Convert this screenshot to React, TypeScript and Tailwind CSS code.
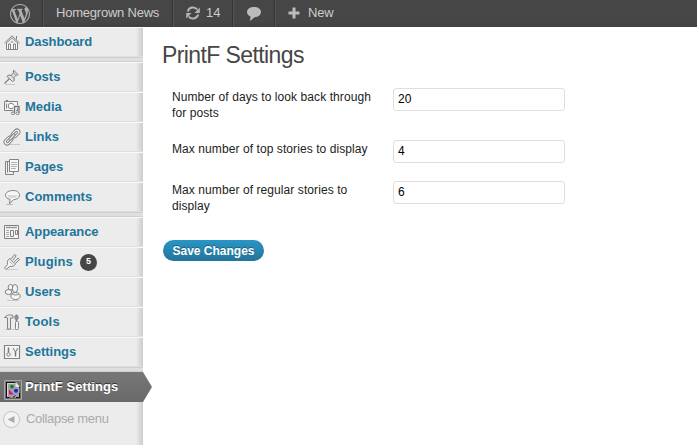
import React from "react";

type IconProps = { children: React.ReactNode; className?: string };

const Glyph = ({ children, className = "" }: IconProps) => (
  <svg
    width="18"
    height="18"
    viewBox="0 0 18 18"
    fill="none"
    stroke="#828282"
    strokeWidth="1"
    className={`ml-[3px] mr-1 shrink-0 ${className}`}
  >
    {children}
  </svg>
);

const HomeIcon = () => (
  <Glyph>
    <path d="M3.5 10v6.5h11V10" fill="#f8f8f8" />
    <path d="M1.5 10 9 2.8l7.5 7.2M3 10.5 9 4.8l6 5.7M13.5 3v3.5" />
    <path d="M5.5 16V11h2v5M10.5 16v-5h2v5M9 8v2" />
  </Glyph>
);
const PinIcon = () => (
  <Glyph>
    <path d="M2 16.5h10" stroke="#c8c8c8" />
    <path d="m1.5 15.5 5-5" strokeWidth="1.3" />
    <path d="m10.500 2 4.700 4.800-2 .4-2.200 2.300.2 3.200-1.500.8L4 8.500l1-1.300 3.200.2 2.200-2.500z" fill="#e4e4e4" />
    <path d="m7.800 7.200 3.500 3.400M10 4.500l3.300 3.200" />
  </Glyph>
);
const MediaIcon = () => (
  <Glyph>
    <path d="M1.5 3.500h13v9h-13zM3 3V2.500h2" fill="#f6f6f6" />
    <circle cx="8" cy="8" r="2.800" fill="#ffffff" />
    <path d="M3.500 5.500v5" />
    <path d="M11.500 15V8.500h5V15" stroke="#ececec" strokeWidth="3" />
    <path d="M11.500 15V8.500h4.500V15" stroke="#777" strokeWidth="1.300" />
    <ellipse cx="10" cy="15.300" rx="1.600" ry="1.300" fill="#eee" />
    <ellipse cx="14.500" cy="15.300" rx="1.600" ry="1.300" fill="#eee" />
  </Glyph>
);
const LinkIcon = () => (
  <Glyph>
    <path d="M6 16.500h11" stroke="#c8c8c8" />
    <g transform="rotate(-45 9 9)">
      <rect x="-1" y="6" width="10" height="6" rx="3" fill="#f8f8f8" />
      <rect x="1.500" y="8" width="5" height="2" rx="1" />
      <rect x="9" y="6" width="10" height="6" rx="3" fill="#f8f8f8" />
      <rect x="11.500" y="8" width="5" height="2" rx="1" />
      <rect x="5" y="7.800" width="8" height="2.400" rx="1.200" fill="#e4e4e4" />
    </g>
  </Glyph>
);
const PagesIcon = () => (
  <Glyph>
    <path d="M6 3.500H2.500v13h8V14" fill="#f0f0f0" />
    <path d="M4.500 4v10.500" />
    <path d="M6.500 1.500h9v12h-9z" fill="#f8f8f8" />
    <path d="M8 4.500h6M8 6.500h6M8 8.500h6M8 10.500h5" stroke="#b0b0b0" />
  </Glyph>
);
const CommentIcon = () => (
  <Glyph>
    <path d="M3 16.500h7" stroke="#bbb" />
    <path
      d="M10 2.500c4 0 6.500 1.900 6.500 4.600s-2.500 4.500-6 4.500L6.500 15.800l.5-4.500C4 10.700 2.500 9.200 2.500 7.100c0-2.700 3.500-4.600 7.500-4.600z"
      fill="#f6f6f6"
    />
    <path d="M5 7.500h9M5 8.500h9M6 9.500h7" stroke="#d8d8d8" />
  </Glyph>
);
const AppearanceIcon = () => (
  <Glyph>
    <path d="M1.500 2.500h14v13h-14z" fill="#f6f6f6" />
    <path d="M3 4.500h11" strokeWidth="1.500" stroke="#999" />
    <path d="M3 7.500h3M3 9.500h3M3 11.500h3M3 13.500h3" stroke="#aaa" />
    <path d="M7.500 7.500h3v6h-3zM12.500 7.500h2v4h-2z" />
  </Glyph>
);
const PluginIcon = () => (
  <Glyph>
    <path d="M4 16.500h11" stroke="#ccc" />
    <path
      d="M7 5.500c1.500 2.500 3 4 5.500 5-.5 2.500-3 3.500-5.500 2.800L3 16.500 1.500 15l3-3.500C3.800 9 4.800 6.500 7 5.500z"
      fill="#f5f5f5"
    />
    <path d="m8 6 3.500-4.500 1.700 1.200-3.500 4.800M11 9.500l4-4.500 1.500 1.500-4 4" fill="#f0f0f0" />
    <path d="m6.500 8.500 3.300 3" stroke="#aaa" />
  </Glyph>
);
const UsersIcon = () => (
  <Glyph>
    <path d="M4 17.500h12" stroke="#c8c8c8" />
    <ellipse cx="7.500" cy="4.300" rx="2.300" ry="2.800" fill="#f4f4f4" />
    <ellipse cx="5.500" cy="9" rx="3.300" ry="2.500" fill="#f4f4f4" />
    <ellipse cx="12" cy="5.500" rx="2.600" ry="4" fill="#f4f4f4" />
    <ellipse cx="12.500" cy="13" rx="4.700" ry="3.500" fill="#f8f8f8" />
    <path d="M9 11c2 1.300 5 1.300 7 0" />
  </Glyph>
);
const ToolsIcon = () => (
  <Glyph>
    <path d="M2 16.500h13" stroke="#c4c4c4" />
    <path d="M4.500 5v11h3V5H10V2.500C7 1.500 4 1.500 1.500 4.500L4 4.500z" fill="#e8e8e8" />
    <path d="M13.500 1.500v7" strokeWidth="1.800" />
    <path d="M12 3h3v3h-3z" fill="#999" />
    <rect x="12.500" y="8.500" width="3" height="8" rx="1" fill="#f4f4f4" />
  </Glyph>
);
const SettingsIcon = () => (
  <Glyph>
    <path d="M1.500 2.500h15v13h-15z" fill="#f8f8f8" strokeWidth="1.200" />
    <path d="M5.500 4.500v5M12.500 8v5.500" strokeWidth="1.600" stroke="#777" />
    <circle cx="5.500" cy="11.500" r="1.700" stroke="#777" />
    <path d="M10.800 5v2l1.700 1.300 1.700-1.300V5" stroke="#777" />
    <path d="M9 4.500v10" stroke="#ddd" />
  </Glyph>
);
const BrokenImageIcon = () => (
  <svg width="18" height="20" viewBox="0 0 18 20" fill="none" className="ml-1 mr-[3px] mt-[5px] shrink-0">
    <path d="M.5.5h17v19H.5z" stroke="#a8a8a8" />
    <path d="M3 3h8.500l3.500 3.500v11H3z" fill="#a4a4a4" />
    <path d="M2.500 17.500v-15h9M2.500 17.500h3M15.500 6v2M15.500 13v4.500H12" stroke="#111" />
    <path d="M12 2.500v4h3.500" fill="#eee" stroke="#dddddd" />
    <path d="M3.500 16.500v-13h7" stroke="#d4d4d4" />
    <circle cx="8" cy="6.700" r="1.900" fill="#16811f" />
    <circle cx="12" cy="10.700" r="2" fill="#1820de" />
    <path d="M5 9.500v5h5z" fill="#de1588" />
    <path d="M9 17.500l2.500-2" stroke="#222" />
  </svg>
);

const WordPressIcon = () => (
  <svg width="20" height="20" viewBox="0 0 20 20" className="ml-[10px]" fill="#b0b0b0">
    <path d="M20 10c0-5.510-4.490-10-10-10C4.480 0 0 4.490 0 10c0 5.520 4.480 10 10 10 5.510 0 10-4.480 10-10zM7.780 15.370L4.370 6.220c.55-.02 1.170-.08 1.170-.08.5-.06.44-1.130-.06-1.110 0 0-1.450.11-2.370.11-.18 0-.37 0-.58-.01C4.120 2.690 6.870 1.110 10 1.110c2.330 0 4.450.87 6.050 2.340-.68-.11-1.650.39-1.650 1.580 0 .74.45 1.360.9 2.100.35.610.55 1.360.55 2.460 0 1.490-1.400 5-1.400 5l-3.030-8.370c.54-.02.82-.17.820-.17.5-.05.44-1.250-.06-1.220 0 0-1.440.12-2.380.12-.87 0-2.330-.12-2.330-.12-.5-.03-.56 1.200-.06 1.220l.92.080 1.260 3.410zM17.410 10c.24-.64.740-1.870.430-4.250.7 1.290 1.050 2.710 1.050 4.250 0 3.290-1.730 6.240-4.400 7.780.97-2.590 1.940-5.200 2.920-7.780zM6.100 18.090C3.120 16.650 1.110 13.530 1.110 10c0-1.300.23-2.480.72-3.590C3.250 10.300 4.670 14.200 6.100 18.090zm4.030-6.630l2.580 6.980c-.86.290-1.760.45-2.710.45-.79 0-1.570-.11-2.290-.33.81-2.380 1.620-4.740 2.420-7.100z" />
  </svg>
);

const RefreshIcon = () => (
  <svg width="16" height="14" viewBox="0 0 16 14" fill="none" className="ml-[11px] shrink-0">
    <path d="M2.800 5.500a5.400 5.400 0 0 1 9.500-2M13.200 8.500a5.400 5.400 0 0 1-9.500 2" stroke="#b4b4b4" strokeWidth="2" />
    <path d="M14.800 1.500V7H9.500zM1.200 12.500V7h5.300z" fill="#b4b4b4" />
  </svg>
);

type Item = { label: string; icon: React.ReactNode; tracking: string; count?: number };

const contentItems: Item[] = [
  { label: "Posts", icon: <PinIcon />, tracking: "" },
  { label: "Media", icon: <MediaIcon />, tracking: "" },
  { label: "Links", icon: <LinkIcon />, tracking: "" },
  { label: "Pages", icon: <PagesIcon />, tracking: "" },
  { label: "Comments", icon: <CommentIcon />, tracking: "" },
];
const adminItems: Item[] = [
  { label: "Appearance", icon: <AppearanceIcon />, tracking: "tracking-[-0.1px]" },
  { label: "Plugins", icon: <PluginIcon />, tracking: "tracking-[0.15px]", count: 5 },
  { label: "Users", icon: <UsersIcon />, tracking: "tracking-[-0.1px]" },
  { label: "Tools", icon: <ToolsIcon />, tracking: "tracking-[0.25px]" },
  { label: "Settings", icon: <SettingsIcon />, tracking: "" },
];

const MenuRow = ({ label, icon, tracking, count }: Item) => (
  <li className="flex h-[30px] items-center border-t border-b border-t-[#f9f9f9] border-b-[#dfdfdf]">
    {icon}
    <span className={`text-[13px] leading-[18px] font-bold text-[#21759b] ${tracking}`}>{label}</span>
    {count !== undefined && (
      <span className="ml-[7px] flex size-[17px] items-center justify-center rounded-full bg-[#464646] text-[9px] font-bold text-white">
        {count}
      </span>
    )}
  </li>
);

const Separator = () => <li className="h-[5px] border-y border-[#cfcfcf] bg-[#dfdfdf]" />;

const Field = ({ label, value, height }: { label: string; value: string; height: string }) => (
  <div className={`flex items-start ${height}`}>
    <label className="w-[221px] pr-4 pt-px text-[12px] leading-4 tracking-[0.08px] text-[#222222]">{label}</label>
    <input
      defaultValue={value}
      className="h-[23px] w-[172px] rounded-[3px] border border-[#dfdfdf] bg-white px-1 pb-[2px] text-[12px] text-black outline-none"
    />
  </div>
);

export default function App() {
  return (
    <div className="flex h-[445px] w-[697px] flex-col overflow-hidden bg-white font-['Liberation_Sans',Arial,sans-serif]">
      <header className="flex h-[27px] shrink-0 items-stretch bg-linear-to-b from-[#464646] from-80% to-[#404040] text-[13px] text-[#cccccc]">
        <div className="flex w-[43px] items-center border-r border-[#333333]">
          <WordPressIcon />
        </div>
        <div className="flex w-[130px] items-center border-r border-l border-r-[#333333] border-l-[#555555] pb-px pl-3 tracking-[-0.22px] whitespace-nowrap">
          Homegrown News
        </div>
        <div className="flex w-[60px] items-center gap-[5px] border-r border-l border-r-[#333333] border-l-[#555555] pb-px">
          <RefreshIcon />
          <span>14</span>
        </div>
        <div className="flex w-[42px] items-center border-r border-l border-r-[#333333] border-l-[#555555] pl-3">
          <svg width="16" height="14" viewBox="0 0 16 14" fill="#bbbbbb">
            <path d="M8 0c4 0 7 2 7 5s-3 5-6 5l-5 4 .5-4.500C2.500 8.800 1 7 1 5c0-3 3-5 7-5z" />
          </svg>
        </div>
        <div className="flex items-center gap-2 border-l border-[#555555] pb-px pl-3">
          <svg width="12" height="12" viewBox="0 0 12 12">
            <path d="M6 .5v11M.5 6h11" stroke="#bbbbbb" strokeWidth="3" />
          </svg>
          <span className="tracking-[-0.2px]">New</span>
        </div>
      </header>

      <div className="flex grow">
        <nav className="w-[152px] shrink-0">
          <ul className="flex h-full flex-col bg-[linear-gradient(to_right,#ececec_136px,#cccccc_143px,#ffffff_143px)]">
            <li className="w-[143px]">
              <ul>
                <MenuRow label="Dashboard" icon={<HomeIcon />} tracking="tracking-[-0.08px]" />
                <Separator />
                {contentItems.map((item) => (
                  <MenuRow key={item.label} {...item} />
                ))}
                <Separator />
                {adminItems.map((item) => (
                  <MenuRow key={item.label} {...item} />
                ))}
                <Separator />
              </ul>
            </li>
            <li className="flex h-[30px] items-center bg-linear-to-b from-[#777777] to-[#696969] [clip-path:polygon(0_0,143px_0,152px_50%,143px_100%,0_100%)]">
              <BrokenImageIcon />
              <span className="text-[13px] font-bold tracking-[0.05px] text-white [text-shadow:0_-1px_0_#333333]">
                PrintF Settings
              </span>
            </li>
            <li className="flex h-[34px] items-center gap-[6px] pl-[3px] text-[13px] text-[#aaaaaa]">
              <svg width="17" height="17" viewBox="0 0 17 17">
                <circle cx="8.500" cy="8.500" r="8" fill="#f3f3f3" stroke="#c0c0c0" />
                <path d="M11.500 5v7l-7-3.500z" fill="#aaaaaa" />
              </svg>
              <span className="tracking-[-0.32px]">Collapse menu</span>
            </li>
          </ul>
        </nav>

        <main className="pt-[14px] pl-[10px]">
          <h1 className="h-[47px] text-[23px] leading-[29px] tracking-[-0.6px] text-[#464646]">PrintF Settings</h1>
          <form className="pl-[10px]">
            <Field label="Number of days to look back through for posts" value="20" height="h-[52px]" />
            <Field label="Max number of top stories to display" value="4" height="h-[41px]" />
            <Field label="Max number of regular stories to display" value="6" height="h-[59px]" />
            <button
              type="button"
              className="-ml-[9px] flex h-[21px] w-[101px] items-center justify-center rounded-full bg-linear-to-b from-[#2a95c5] to-[#21759b] text-[12px] font-bold whitespace-nowrap text-white [text-shadow:0_-1px_0_#1b607f]"
            >
              Save Changes
            </button>
          </form>
        </main>
      </div>
    </div>
  );
}
